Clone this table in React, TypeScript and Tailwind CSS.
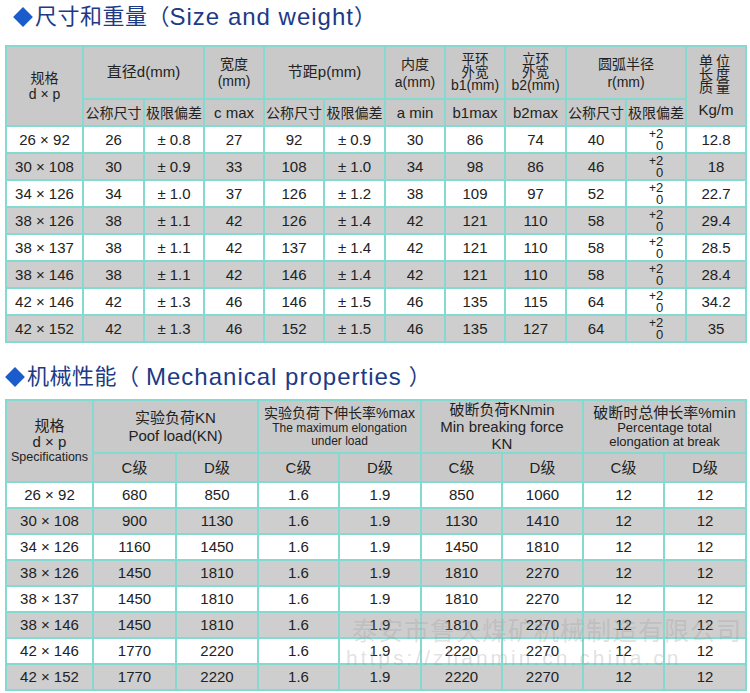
import React from "react";

const cell = "border-2 border-[#84d9d0] text-center align-middle p-0 leading-[20px]";
const head = "border-2 border-[#84d9d0] text-center align-middle p-0 bg-[#c9c9c9] font-normal";

const sizeRows = [
  ["26 × 92", "26", "± 0.8", "27", "92", "± 0.9", "30", "86", "74", "40", "12.8"],
  ["30 × 108", "30", "± 0.9", "33", "108", "± 1.0", "34", "98", "86", "46", "18"],
  ["34 × 126", "34", "± 1.0", "37", "126", "± 1.2", "38", "109", "97", "52", "22.7"],
  ["38 × 126", "38", "± 1.1", "42", "126", "± 1.4", "42", "121", "110", "58", "29.4"],
  ["38 × 137", "38", "± 1.1", "42", "137", "± 1.4", "42", "121", "110", "58", "28.5"],
  ["38 × 146", "38", "± 1.1", "42", "146", "± 1.4", "42", "121", "110", "58", "28.4"],
  ["42 × 146", "42", "± 1.3", "46", "146", "± 1.5", "46", "135", "115", "64", "34.2"],
  ["42 × 152", "42", "± 1.3", "46", "152", "± 1.5", "46", "135", "127", "64", "35"],
];

const mechRows = [
  ["26 × 92", "680", "850", "1.6", "1.9", "850", "1060", "12", "12"],
  ["30 × 108", "900", "1130", "1.6", "1.9", "1130", "1410", "12", "12"],
  ["34 × 126", "1160", "1450", "1.6", "1.9", "1450", "1810", "12", "12"],
  ["38 × 126", "1450", "1810", "1.6", "1.9", "1810", "2270", "12", "12"],
  ["38 × 137", "1450", "1810", "1.6", "1.9", "1810", "2270", "12", "12"],
  ["38 × 146", "1450", "1810", "1.6", "1.9", "1810", "2270", "12", "12"],
  ["42 × 146", "1770", "2220", "1.6", "1.9", "2220", "2270", "12", "12"],
  ["42 × 152", "1770", "2220", "1.6", "1.9", "2220", "2270", "12", "12"],
];

const sizeCols = [77, 61, 60, 60, 60, 61, 60, 60, 61, 60, 60, 60];
const mechCols = [87, 83, 82, 81, 82, 81, 81, 81, 82];

function Title({ cn, en, indent, gap }: { cn: string; en: string; indent: string; gap: string }) {
  return (
    <div className={`flex h-[34px] items-center text-[#1d3a86] ${indent}`}>
      <span className="mr-[2px] inline-block h-[14px] w-[14px] rotate-45 bg-[#1a5ccc]" />
      <span className="ml-[3px] text-[22px] leading-none tracking-[0.5px]">{cn}</span>
      <span className="text-[22px] leading-none">（</span>
      <span className={`text-[24px] leading-none tracking-[1px] ${gap}`}>{en}</span>
      <span className="text-[22px] leading-none">）</span>
    </div>
  );
}

function Tolerance() {
  return (
    <div className="flex h-[24px] items-start justify-center">
      <span className="mt-[1px] text-[12px] leading-[11px]">+</span>
      <span className="flex flex-col text-[13px] leading-[12px]">
        <span>2</span>
        <span>0</span>
      </span>
    </div>
  );
}

function SizeTable() {
  return (
    <table className="ml-[5px] w-[740px] table-fixed border-collapse text-[#222]">
      <colgroup>
        {sizeCols.map((w, i) => (
          <col key={i} style={{ width: w }} />
        ))}
      </colgroup>
      <thead className="text-[14px]">
        <tr className="h-[53px]">
          <th rowSpan={2} className={`${head} leading-[16px]`}>
            规格
            <br />d × p
          </th>
          <th colSpan={2} className={`${head} text-[15px]`}>直径d(mm)</th>
          <th className={`${head} leading-[17px]`}>
            宽度
            <br />
            (mm)
          </th>
          <th colSpan={2} className={`${head} text-[15px]`}>节距p(mm)</th>
          <th className={`${head} leading-[18px]`}>
            内度
            <br />
            a(mm)
          </th>
          <th className={`${head} leading-[13px]`}>
            <span className="text-[13.5px]">平环</span>
            <br />
            <span className="text-[13.5px]">外宽</span>
            <br />
            b1(mm)
          </th>
          <th className={`${head} leading-[13px]`}>
            <span className="text-[13.5px]">立环</span>
            <br />
            <span className="text-[13.5px]">外宽</span>
            <br />
            b2(mm)
          </th>
          <th colSpan={2} className={`${head} leading-[18px]`}>
            圆弧半径
            <br />
            r(mm)
          </th>
          <th rowSpan={2} className={head}>
            <div className="flex flex-col items-center">
              <span className="leading-[13px] tracking-[3px]">单位</span>
              <span className="leading-[13px] tracking-[3px]">长度</span>
              <span className="leading-[13px] tracking-[3px]">质量</span>
              <span className="mt-[8px] text-[15px] leading-[16px]">Kg/m</span>
            </div>
          </th>
        </tr>
        <tr className="h-[27px] leading-[20px]">
          <th className={head}>公称尺寸</th>
          <th className={head}>极限偏差</th>
          <th className={`${head} text-[15px]`}>c max</th>
          <th className={head}>公称尺寸</th>
          <th className={head}>极限偏差</th>
          <th className={`${head} text-[15px]`}>a min</th>
          <th className={`${head} text-[15px]`}>b1max</th>
          <th className={`${head} text-[15px]`}>b2max</th>
          <th className={head}>公称尺寸</th>
          <th className={head}>极限偏差</th>
        </tr>
      </thead>
      <tbody className="text-[15px]">
        {sizeRows.map((r, i) => (
          <tr key={r[0]} className={`h-[27px] ${i % 2 ? "bg-[#cecece]" : "bg-white"}`}>
            {r.slice(0, 10).map((v, j) => (
              <td key={j} className={cell}>
                {v}
              </td>
            ))}
            <td className={cell}>
              <Tolerance />
            </td>
            <td className={cell}>{r[10]}</td>
          </tr>
        ))}
      </tbody>
    </table>
  );
}

function MechTable() {
  return (
    <table className="ml-[5px] w-[740px] table-fixed border-collapse text-[#222]">
      <colgroup>
        {mechCols.map((w, i) => (
          <col key={i} style={{ width: w }} />
        ))}
      </colgroup>
      <thead>
        <tr className="h-[51px]">
          <th rowSpan={2} className={head}>
            <div className="flex flex-col items-center">
              <span className="text-[15px] leading-[17px]">规格</span>
              <span className="text-[15px] leading-[16px]">d × p</span>
              <span className="text-[12.5px] leading-[15px]">Specifications</span>
            </div>
          </th>
          <th colSpan={2} className={`${head} text-[15px] leading-[18px]`}>
            实验负荷KN
            <br />
            Poof load(KN)
          </th>
          <th colSpan={2} className={head}>
            <div className="flex flex-col items-center">
              <span className="text-[14px] leading-[17px]">实验负荷下伸长率%max</span>
              <span className="text-[12px] leading-[13px]">The maximum elongation</span>
              <span className="text-[12px] leading-[13px]">under load</span>
            </div>
          </th>
          <th colSpan={2} className={`${head} text-[15px] leading-[17px]`}>
            破断负荷KNmin
            <br />
            Min breaking force
            <br />
            KN
          </th>
          <th colSpan={2} className={head}>
            <div className="flex flex-col items-center">
              <span className="text-[15px] leading-[17px]">破断时总伸长率%min</span>
              <span className="text-[13px] leading-[14px]">Percentage total</span>
              <span className="text-[13px] leading-[14px]">elongation at break</span>
            </div>
          </th>
        </tr>
        <tr className="h-[29px] text-[15px] leading-[20px]">
          {["C级", "D级", "C级", "D级", "C级", "D级", "C级", "D级"].map((v, i) => (
            <th key={i} className={head}>
              {v}
            </th>
          ))}
        </tr>
      </thead>
      <tbody className="text-[15px]">
        {mechRows.map((r, i) => (
          <tr key={r[0]} className={`h-[26px] ${i % 2 ? "bg-[#cecece]" : "bg-white"}`}>
            {r.map((v, j) => (
              <td key={j} className={cell}>
                {v}
              </td>
            ))}
          </tr>
        ))}
      </tbody>
    </table>
  );
}

export default function App() {
  return (
    <div className="relative h-[693px] w-[750px] overflow-hidden bg-white font-['Liberation_Sans','Noto_Sans_CJK_SC',sans-serif]">
      <Title cn="尺寸和重量" en="Size and weight" indent="pl-[16px]" gap="" />
      <div className="mt-[11px]">
        <SizeTable />
      </div>
      <div className="mt-[17px]">
        <Title cn="机械性能" en="Mechanical properties" indent="pl-[8px]" gap="ml-[7px] mr-[7px] tracking-[0.6px]" />
      </div>
      <div className="mt-[5px]">
        <MechTable />
      </div>
      <div className="pointer-events-none absolute left-[352px] top-[616px] flex flex-col whitespace-nowrap text-[#9a9a9a]/30">
        <span className="text-[25px] leading-[30px] tracking-[1px]">泰安市鲁天煤矿机械制造有限公司</span>
        <span className="ml-[-6px] text-[21px] leading-[24px] tracking-[3px]">https://zhanmin.cn.china.cn</span>
      </div>
    </div>
  );
}
